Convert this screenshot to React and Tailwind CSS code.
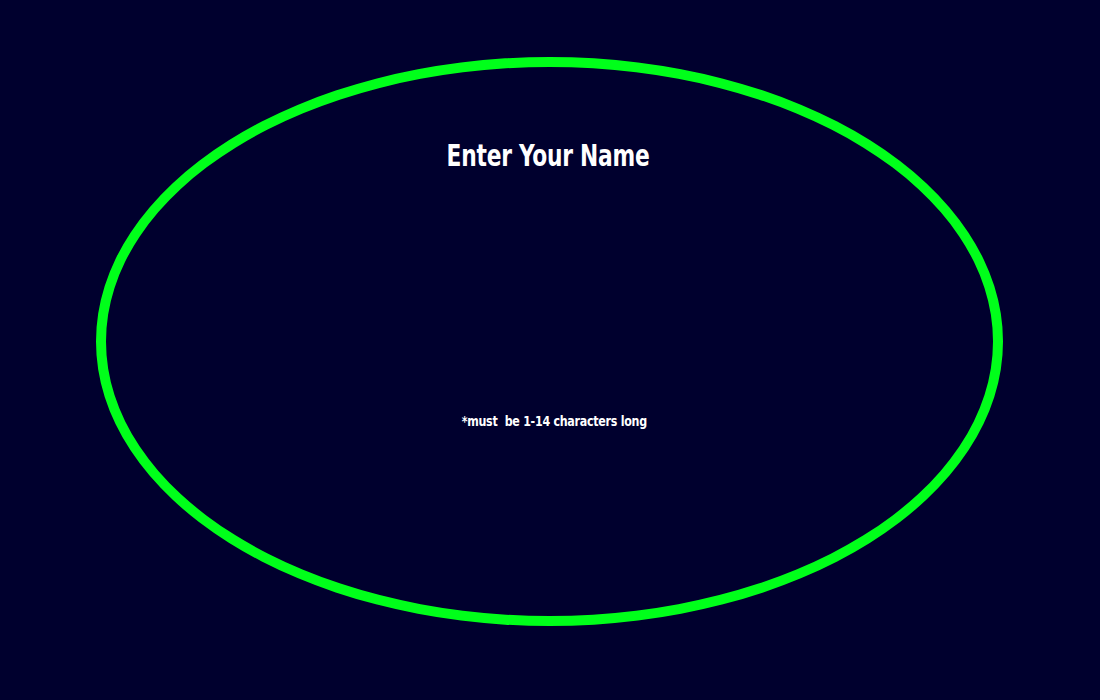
export default function App() {
  return (
    <div className="w-full h-[700px] bg-[#00002e] pt-[57px] pl-[96px]">
      {/* green ring */}
      <div className="w-[907px] h-[569px] rounded-[50%] border-[10px] border-[#00ff1a] flex flex-col items-center pt-[70px] font-['Impact','Liberation_Sans_Narrow','DejaVu_Sans_Condensed',sans-serif] text-white">
        <h1 className="text-[31px] leading-[36px] font-bold tracking-[-0.3px] scale-x-[0.78] -ml-[3px]">Enter Your Name</h1>
        <input
          type="text"
          className="mt-[100px] w-[300px] h-[40px] bg-transparent outline-none text-center text-white"
        />
        <p className="mt-[99px] ml-[10px] text-[14px] leading-[18px] font-bold tracking-[-0.3px] scale-x-[0.88]">*must&nbsp; be 1-14 characters long</p>
      </div>
    </div>
  );
}
